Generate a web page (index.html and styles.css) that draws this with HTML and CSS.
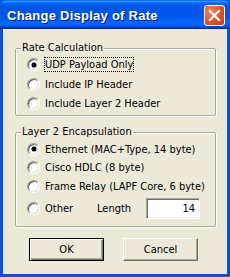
FILE: index.html
```html
<!DOCTYPE html>
<html>
<head>
<meta charset="utf-8">
<link rel="stylesheet" href="styles.css">
</head>
<body>
<div class="window">
  <div class="titlebar">
    <span class="title">Change Display of Rate</span>
    <div class="close">
      <svg width="21" height="21" viewBox="0 0 21 21">
        <path d="M6 6 L15 15 M15 6 L6 15" stroke="#fff" stroke-width="2.2" stroke-linecap="square"/>
      </svg>
    </div>
  </div>
  <div class="client">
    <fieldset class="group g1">
      <legend>Rate Calculation</legend>
      <div class="opt"><span class="radio checked"></span><span class="text focus">UDP Payload Only</span></div>
      <div class="opt"><span class="radio"></span><span class="text">Include IP Header</span></div>
      <div class="opt"><span class="radio"></span><span class="text">Include Layer 2 Header</span></div>
    </fieldset>
    <fieldset class="group g2">
      <legend>Layer 2 Encapsulation</legend>
      <div class="opt"><span class="radio checked"></span><span class="text">Ethernet (MAC+Type, 14 byte)</span></div>
      <div class="opt"><span class="radio"></span><span class="text">Cisco HDLC (8 byte)</span></div>
      <div class="opt"><span class="radio"></span><span class="text">Frame Relay (LAPF Core, 6 byte)</span></div>
      <div class="opt other"><span class="radio"></span><span class="text other-text">Other</span><span class="len-label">Length</span><span class="input">14</span></div>
    </fieldset>
    <div class="buttons">
      <div class="btn default">OK</div>
      <div class="btn">Cancel</div>
    </div>
  </div>
</div>
</body>
</html>
```
FILE: styles.css
```css
html, body {
  margin: 0;
  padding: 0;
  background: #ECE9D8;
}
.window {
  width: 230px;
  height: 277px;
  box-sizing: border-box;
  display: flex;
  flex-direction: column;
  background: #0852E0;
  font-family: "DejaVu Sans Condensed", "DejaVu Sans", sans-serif;
  font-stretch: condensed;
  font-size: 11px;
  color: #000;
}
.titlebar {
  height: 29px;
  flex: none;
  display: flex;
  align-items: center;
  justify-content: space-between;
  padding: 0 5px 0 7px;
  border-radius: 7px 7px 0 0;
  background: linear-gradient(to bottom, #0058EE 0%, #3593FF 4%, #288EFF 6%, #127DFF 8%, #036FFC 10%, #0262EE 14%, #0057E5 20%, #0054E3 24%, #0055EB 56%, #005BF5 66%, #026AFE 76%, #0062EF 86%, #0052D6 92%, #0040AB 94%, #003092 100%);
}
.title {
  font-family: "Liberation Sans", Arial, sans-serif;
  font-stretch: normal;
  font-weight: bold;
  font-size: 13px;
  letter-spacing: 0.25px;
  color: #fff;
  text-shadow: 1px 1px 0 #0A1883;
  margin-top: 1px;
}
.close {
  width: 21px;
  height: 21px;
  box-sizing: border-box;
  border: 1px solid #fff;
  border-radius: 3px;
  background: radial-gradient(circle at 30% 30%, #F0896A 0%, #E35A2E 45%, #C63A12 100%);
  display: flex;
  align-items: center;
  justify-content: center;
  margin-top: 1px;
}
.close svg {
  display: block;
  margin: -1px;
}
.client {
  flex: 1;
  margin: 0 3px 3px 3px;
  background: #ECE9D8;
  padding: 0 11px 0 12px;
  display: flex;
  flex-direction: column;
}
.group {
  margin: 0;
  padding: 0;
  border: 1px solid #ACA899;
  border-radius: 2px;
  box-shadow: inset 1px 1px 0 #fff, 1px 1px 0 #fff;
  min-width: 0;
}
.group legend {
  margin-left: 5px;
  padding: 0 1px;
  line-height: 14px;
  height: 14px;
}
.g1 {
  margin-top: 12px;
  padding-bottom: 1.5px;
}
.g1 .opt {
  height: 19.5px;
}
.g2 {
  margin-top: 9px;
  padding-top: 1px;
  padding-bottom: 4.5px;
}
.g2 .opt {
  height: 18.5px;
}
.g2 .opt.other {
  height: 26px;
}
.opt {
  display: flex;
  align-items: center;
  padding-left: 11px;
}
.radio {
  width: 13px;
  height: 13px;
  box-sizing: border-box;
  border-radius: 50%;
  border: 1px solid;
  border-color: #9C9A8F #fff #fff #9C9A8F;
  box-shadow: inset 1px 1px 0 #5F5D55, inset -1px -1px 0 #E2DFD2;
  background: #fff;
  margin-right: 4px;
  flex: none;
  display: flex;
  align-items: center;
  justify-content: center;
}
.radio.checked::after {
  content: "";
  width: 4px;
  height: 4px;
  border-radius: 50%;
  background: #000;
  box-shadow: 0 0 0 0.5px #000;
}
.text {
  border: 1px solid transparent;
  line-height: 13px;
  white-space: nowrap;
}
.text.focus {
  border: 1px dotted #000;
}
.other-text {
  width: 53px;
  box-sizing: border-box;
}
.len-label {
  width: 49px;
  flex: none;
}
.input {
  width: 54px;
  height: 21px;
  box-sizing: border-box;
  border: 1px solid;
  border-color: #ACA899 #fff #fff #ACA899;
  box-shadow: inset 1px 1px 0 #716F64, inset -1px -1px 0 #F1EFE2;
  background: #fff;
  text-align: right;
  padding-right: 4px;
  line-height: 19px;
}
.buttons {
  display: flex;
  gap: 19px;
  margin-top: 11px;
  padding-left: 14px;
}
.btn {
  width: 75px;
  height: 23px;
  box-sizing: border-box;
  display: flex;
  align-items: center;
  justify-content: center;
  background: #ECE9D8;
  border: 1px solid;
  border-color: #fff #716F64 #716F64 #fff;
  box-shadow: inset -1px -1px 0 #ACA899;
}
.btn.default {
  border: 1px solid #000;
  box-shadow: inset 1px 1px 0 #fff, inset -1px -1px 0 #716F64, inset -2px -2px 0 #ACA899;
}
```
